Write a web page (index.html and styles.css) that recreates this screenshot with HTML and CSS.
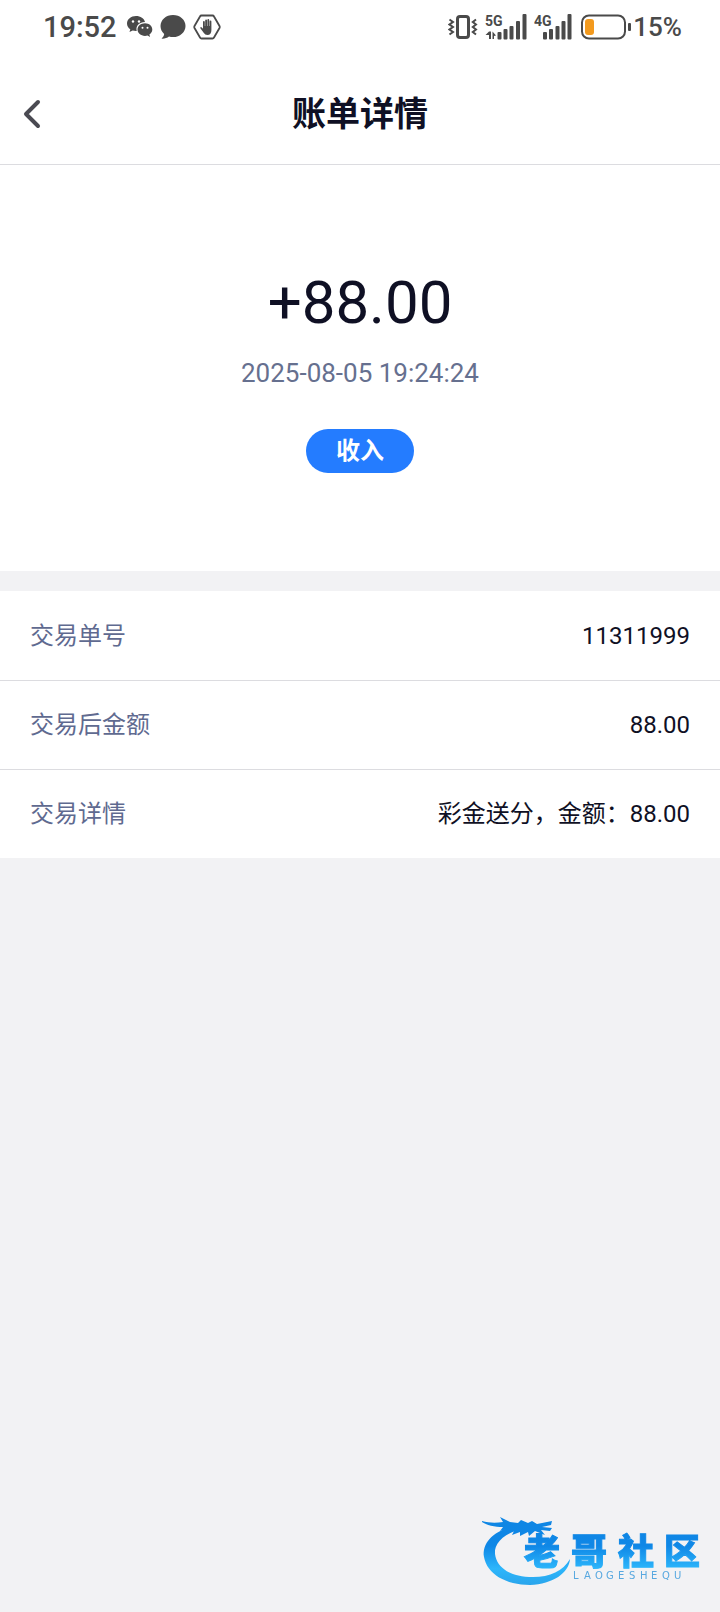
FILE: index.html
```html
<!DOCTYPE html>
<html lang="zh-CN">

<head>
    <meta charset="UTF-8">
    <meta name="viewport" content="width=device-width, initial-scale=1.0">
    <title>账单详情</title>
    <link rel="stylesheet" href="styles.css">
</head>

<body>
    <div class="statusbar">
        <div class="status-left">
            <span class="time">19:52</span>
            <svg width="26" height="26" viewBox="0 0 26 26">
                <path fill="#4a4a4a" d="M9 2C4 2 0 5.300 0 9.500c0 2.400 1.300 4.400 3.300 5.800L2.500 18l3.200-1.600c1 .3 2.100.5 3.300.5h.7C8.500 11.500 12.500 8 18 8 17.200 4.500 13.500 2 9 2z" />
                <path fill="#4a4a4a" d="M18 9.300c-4.200 0-7.500 2.800-7.500 6.300s3.300 6.300 7.500 6.300c.9 0 1.700-.1 2.500-.4l2.600 1.500-.7-2.400c1.800-1.200 2.900-3 2.900-5 0-3.500-3.200-6.300-7.300-6.300z" />
                <g fill="#fff">
                    <circle cx="6" cy="7.500" r="1.200" />
                    <circle cx="12" cy="7.500" r="1.200" />
                    <circle cx="15.500" cy="13.800" r="1" />
                    <circle cx="20.500" cy="13.800" r="1" />
                </g>
            </svg>
            <svg width="26" height="26" viewBox="0 0 26 26">
                <path fill="#4a4a4a" d="M13 1C6 1 .5 5.800.5 12c0 3.300 1.400 6 3.700 8-.2 1.800-1.200 3.300-2.700 4.600 3 .2 5.500-.5 7.500-2.100 1.300.4 2.600.6 4 .6 7 0 12.500-4.900 12.500-11.100S20 1 13 1z" />
            </svg>
            <svg width="28" height="26" viewBox="0 0 28 26">
                <path fill="none" stroke="#4a4a4a" stroke-width="1.800" stroke-linejoin="round" d="M8.500 1.500h11q1 0 1.500 1L26.500 12q.5 1 0 2L21 23.500q-.5 1-1.500 1h-11q-1 0-1.500-1L1.500 14q-.5-1 0-2L7 2.500q.5-1 1.500-1z" />
                <path fill="#4a4a4a" d="M10.500 18.500L7.500 14.500q-.6-1.200.4-1.500.8 0 2.100 1.700V8q0-1 .9-1t.9 1v4h.4V6.500q0-1 .9-1t.9 1V12h.4V6q0-1 .9-1t.9 1v6h.4V7.500q0-1 .9-1t.9 1V16q0 5-4 5-2.200 0-4-2.500z" />
            </svg>
        </div>
        <div class="status-right">
            <!-- vibrate -->
            <svg width="30" height="26" viewBox="0 0 30 26">
                <g fill="none" stroke="#4a4a4a">
                    <rect x="9.500" y="2.500" width="11" height="21" rx="2.500" stroke-width="3" />
                    <path stroke-width="2" d="M1.500 5.500l3.500 2.500-3.500 2.500L5 13l-3.500 2.500L5 18l-3.500 2.500M28 5.500L24.800 8l3.200 2.500-3.200 2.500 3.200 2.500-3.200 2.500 3.200 2.500" />
                </g>
            </svg>
            <!-- signal, sim 1 -->
            <svg width="42" height="26" viewBox="0 0 42 26">
                <text class="net" x="0" y="12">5G</text>
                <path fill="#4a4a4a" d="M4 17.500h2V25H4v-4H.5zM7.500 17.500L11 21.500 9 22v3H7.500z" />
                <g fill="#4a4a4a">
                    <rect x="12.500" y="18" width="4" height="7.500" rx="1" />
                    <rect x="18.500" y="15" width="4" height="10.500" rx="1" />
                    <rect x="24.500" y="12" width="4" height="13.500" rx="1" />
                    <rect x="31" y="7" width="4" height="18.500" rx="1" />
                    <rect x="37.500" y="0" width="4" height="25.500" rx="1" />
                </g>
            </svg>
            <!-- signal, sim 2 -->
            <svg width="40" height="26" viewBox="0 0 40 26">
                <text class="net" x="0" y="12">4G</text>
                <g fill="#4a4a4a">
                    <rect x="9" y="18" width="4" height="7.500" rx="1" />
                    <rect x="15" y="15" width="4" height="10.500" rx="1" />
                    <rect x="21.500" y="12" width="4" height="13.500" rx="1" />
                    <rect x="27.500" y="7" width="4" height="18.500" rx="1" />
                    <rect x="33.500" y="0" width="4" height="25.500" rx="1" />
                </g>
            </svg>
            <div class="battery">
                <svg width="50" height="26" viewBox="0 0 50 26">
                    <rect x="1" y="1.500" width="43" height="23" rx="7" fill="#fff" stroke="#4a4a4a" stroke-width="2" />
                    <rect x="4" y="5" width="9" height="16" rx="3" fill="#f39a1e" />
                    <rect x="47" y="9" width="3" height="8" rx="1" fill="#4a4a4a" />
                </svg>
                <span>15%</span>
            </div>
        </div>
    </div>

    <header>
        <button type="button" class="back" aria-label="返回">
            <svg width="20" height="32" viewBox="0 0 20 32">
                <path fill="none" stroke="#4a4a52" stroke-width="4" stroke-linecap="round" stroke-linejoin="round" d="M16 4L4 16l12 12" />
            </svg>
        </button>
        <h1>账单详情</h1>
    </header>

    <main>
        <section class="summary">
            <p class="amount">+88.00</p>
            <p class="date">2025-08-05 19:24:24</p>
            <span class="tag">收入</span>
        </section>

        <dl class="details">
            <div class="row">
                <dt>交易单号</dt>
                <dd>11311999</dd>
            </div>
            <div class="row">
                <dt>交易后金额</dt>
                <dd>88.00</dd>
            </div>
            <div class="row">
                <dt>交易详情</dt>
                <dd>彩金送分，金额：88.00</dd>
            </div>
        </dl>
    </main>

    <!-- community watermark -->
    <svg class="watermark" width="230" height="80" viewBox="0 0 230 80">
        <defs>
            <linearGradient id="blue" gradientUnits="userSpaceOnUse" x1="0" y1="10" x2="0" y2="75">
                <stop offset="0" stop-color="#0f86e4" />
                <stop offset="0.400" stop-color="#0f87e6" />
                <stop offset="0.750" stop-color="#2db6fb" />
                <stop offset="1" stop-color="#2aa5ec" />
            </linearGradient>
        </defs>
        <g fill="url(#blue)">
            <path d="M33 17C14 22 4 34 6 47c3 17 22 28 46 28 23-1 39-12 40-26-7 12-20 18-37 18-21 0-36-8-38-23-1-10 7-18 20-23z" />
            <path d="M4 11c7 2 14 2 21 1l-3-5 10 5 8 1 3-3 7 3 4-2 5 3 15-3-1 4-9 2 10 1-2 3-9-1 4 5-10-4-6 5-1-4-8 4v-4l-8 3 2-4-10 3 4-5-8 2 3-4c-8 0-17-2-21-5z" />
            <text class="mark" x="46 93 140 186" y="55">老哥社区</text>
        </g>
        <text class="mark-sub" x="95 106 117 128 140 151 162 173 184 196" y="69">LAOGESHEQU</text>
    </svg>
</body>

</html>
```
FILE: styles.css
```css
* {
    margin: 0;
    padding: 0;
    box-sizing: border-box;
}

body {
    background: #f2f2f4;
    color: #0f1024;
    font-family: Roboto, "Noto Sans CJK SC", sans-serif;
    font-size: 24px;
    line-height: 32px;
}

svg {
    display: block;
}

.statusbar {
    display: flex;
    justify-content: space-between;
    align-items: center;
    height: 54px;
    padding: 0 38px 0 43px;
    background: #fff;
    color: #4a4a4a;
    font-weight: 500;
}

.status-left,
.status-right {
    display: flex;
    align-items: center;
    gap: 7px;
}

.time {
    font-size: 29px;
    margin-right: 3px;
}

.battery {
    display: flex;
    align-items: center;
    gap: 2px;
    font-size: 26px;
}

.net {
    font-size: 14px;
    font-weight: 700;
    fill: #4a4a4a;
}

header {
    position: relative;
    height: 111px;
    padding-top: 10px;
    display: flex;
    align-items: center;
    justify-content: center;
    background: #fff;
    border-bottom: 1px solid #dcdce0;
}

.back {
    position: absolute;
    left: 22px;
    background: none;
    border: none;
    cursor: pointer;
}

h1 {
    font-size: 34px;
    font-weight: 700;
    line-height: 48px;
}

.summary {
    display: flex;
    flex-direction: column;
    align-items: center;
    padding: 103px 20px 98px;
    background: #fff;
}

.amount {
    font-size: 60px;
    line-height: 70px;
}

.date {
    margin: 19px 0 40px;
    font-size: 26px;
    color: #66708f;
}

.tag {
    padding: 6px 30px;
    border-radius: 22px;
    background: #247cff;
    color: #fff;
    font-weight: 700;
}

.details {
    margin-top: 20px;
    background: #fff;
}

.row {
    display: flex;
    justify-content: space-between;
    align-items: center;
    min-height: 89px;
    padding: 0 30px;
}

.row + .row {
    border-top: 1px solid #dcdce0;
}

dt {
    color: #5f6a90;
}

.watermark {
    position: fixed;
    right: 12px;
    bottom: 22px;
}

.mark {
    font-family: "Noto Sans CJK SC", sans-serif;
    font-size: 36px;
    font-weight: 900;
    stroke: url(#blue);
    stroke-width: 1px;
}

.mark-sub {
    font-family: "DejaVu Sans", sans-serif;
    font-size: 10px;
    fill: #58a8e0;
}
```
